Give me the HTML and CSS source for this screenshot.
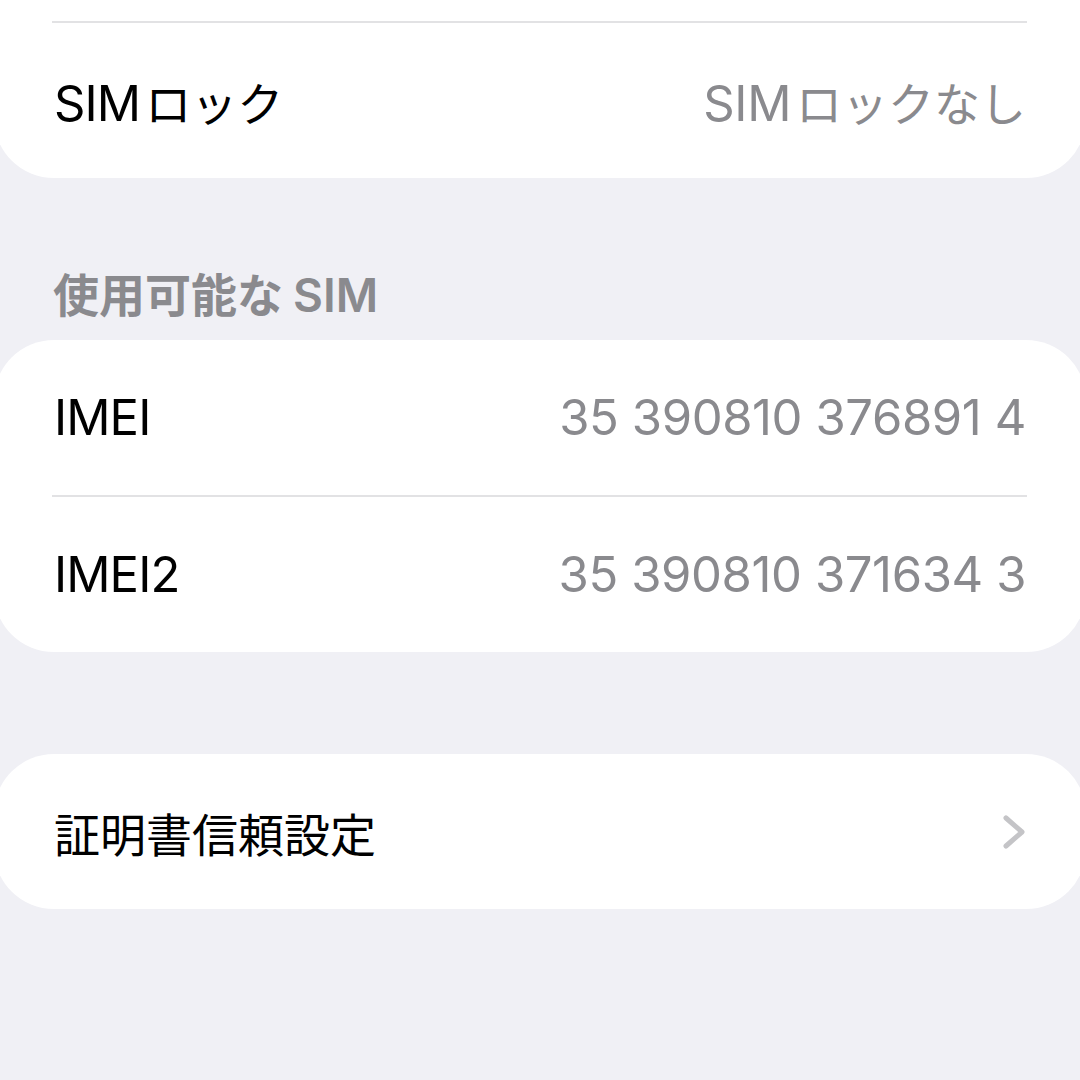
FILE: index.html
```html
<!DOCTYPE html>
<html lang="ja">
<head>
    <meta charset="UTF-8">
    <meta name="viewport" content="width=device-width, initial-scale=1.0">
    <title>情報</title>
    <link rel="stylesheet" href="styles.css">
</head>
<body>

    <div class="group group-top">
        <div class="separator"></div>
        <div class="row">
            <span class="label">SIM<span class="cjk">ロック</span></span>
            <span class="value">SIM<span class="cjk">ロックなし</span></span>
        </div>
    </div>

    <h3 class="section-title"><span class="cjk-title">使用可能な</span>SIM</h3>

    <div class="group">
        <div class="row">
            <span class="label">IMEI</span>
            <span class="value">35 390810 376891 4</span>
        </div>
        <div class="separator"></div>
        <div class="row">
            <span class="label">IMEI2</span>
            <span class="value">35 390810 371634 3</span>
        </div>
    </div>

    <div class="group group-spaced">
        <div class="row">
            <span class="label cjk-only">証明書信頼設定</span>
            <svg class="chevron" width="26" height="36" viewBox="0 0 26 36">
                <path d="M4 4 L20 18 L4 32" fill="none" stroke="#c4c4c7" stroke-width="5" stroke-linecap="round" stroke-linejoin="round"/>
            </svg>
        </div>
    </div>

</body>
</html>
```

FILE: styles.css
```css
body {
    margin: 0;
    background-color: #f0f0f5;
    font-family: Inter, "Noto Sans CJK JP", sans-serif;
    overflow: hidden;
    height: 1080px;
}

.group {
    background-color: #fff;
    margin: 0 -6px;
    border-radius: 60px;
}
.group-top {
    padding-top: 21px;
    border-top-left-radius: 0;
    border-top-right-radius: 0;
}
.group-spaced {
    margin-top: 102px;
}

.row {
    height: 155px;
    display: flex;
    align-items: center;
    justify-content: space-between;
    padding: 0 60px 0 60px;
}

.separator {
    height: 2px;
    background-color: #e2e2e4;
    margin: 0 59px 0 58px;
}

.label,
.value {
    font-size: 49px;
    letter-spacing: -0.9px;
}
.label {
    color: #000;
}
.value {
    color: #8a8a8e;
    letter-spacing: -0.4px;
}
.cjk {
    font-size: 46px;
    letter-spacing: 0;
    font-family: "Noto Sans CJK JP", sans-serif;
    margin-left: 5px;
}
.cjk-only {
    font-size: 46px;
    letter-spacing: 0;
    font-family: "Noto Sans CJK JP", sans-serif;
}

.section-title {
    margin: 0;
    padding: 84px 0 18px 53px;
    height: 60px;
    line-height: 60px;
    font-size: 46px;
    font-weight: 600;
    color: #8a8a8e;
}
.cjk-title {
    font-family: "Noto Sans CJK JP", sans-serif;
    margin-right: 10px;
}

.chevron {
    margin-right: -2px;
}
```
